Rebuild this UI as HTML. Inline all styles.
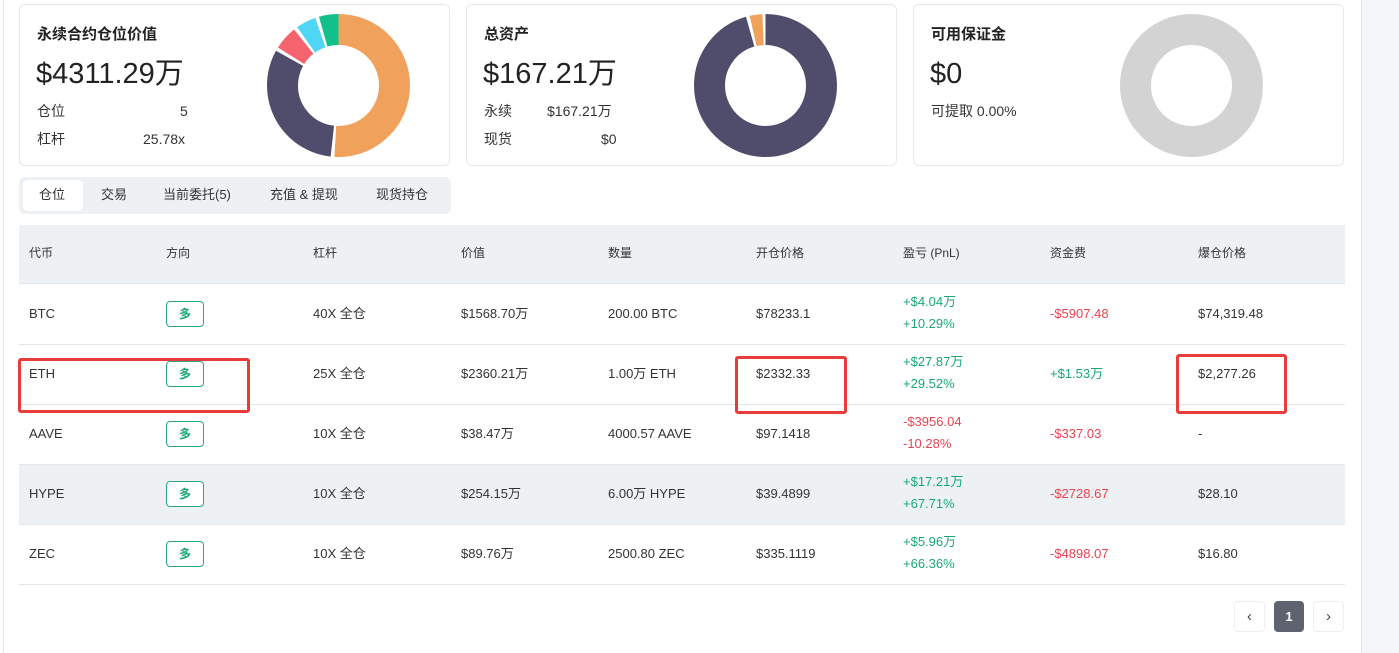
<!DOCTYPE html>
<html><head><meta charset="utf-8"><style>
*{margin:0;padding:0;box-sizing:border-box}
body{width:1399px;height:653px;background:#fff;font-family:"Liberation Sans","Noto Sans CJK SC",sans-serif;color:#333;position:relative;overflow:hidden}
.abs{position:absolute}
.card{position:absolute;top:4px;height:162px;width:431px;border:1px solid #e6e8eb;border-radius:6px;background:#fff}
.ct{position:absolute;left:17px;top:20px;font-size:15px;font-weight:bold;color:#222;line-height:20px}
.cv{position:absolute;left:16px;top:52px;font-size:29px;color:#222;line-height:34px}
.cr{position:absolute;left:17px;font-size:14px;color:#333;line-height:18px}
.tabs{left:19px;top:177px;width:432px;height:37px;background:#eef1f4;border-radius:6px}
.tab{position:absolute;top:9px;font-size:13px;color:#333;line-height:18px}
.th{left:19px;top:225px;width:1326px;height:59px;background:#eef1f4;border-bottom:1px solid #e3e6ea}
.row{left:19px;width:1326px;height:60px;border-bottom:1px solid #e3e6ea}
.c{position:absolute;font-size:13px;color:#333;line-height:18px;top:20px}
.h{font-size:12px;top:19px;color:#333}
.c.t1{top:8px}.c.t2{top:30px}
.g{color:#1aa776}.r{color:#e8434f}
.tag{position:absolute;left:147px;top:16px;width:38px;height:26px;border:1px solid #2aa57f;border-radius:4px;color:#1aa776;font-size:12px;font-weight:bold;text-align:center;line-height:24px}
.box{position:absolute;border:3px solid #ea3b3b;border-radius:3px}
</style></head><body>
<div class="abs" style="left:3px;top:0;width:1px;height:653px;background:#e6e6e6"></div>
<div class="abs" style="left:1361px;top:0;width:38px;height:653px;background:#f5f6f7;border-left:1px solid #e3e3e3"></div>

<div class="card" style="left:19px">
<div class="ct">永续合约仓位价值</div>
<div class="cv">$4311.29万</div>
<div class="cr" style="top:97px">仓位</div><div class="cr" style="top:97px;left:160px">5</div>
<div class="cr" style="top:125px">杠杆</div><div class="cr" style="top:125px;left:123px">25.78x</div>
</div>
<svg class="abs" style="left:266px;top:13px" width="145" height="145" viewBox="0 0 145 145">
<g transform="rotate(-90 72.5 72.5)" fill="none" stroke-width="31">
<circle cx="72.5" cy="72.5" r="56" stroke="#f0a15c" stroke-dasharray="179 352" stroke-dashoffset="0"/>
<circle cx="72.5" cy="72.5" r="56" stroke="#4f4d6b" stroke-dasharray="110 352" stroke-dashoffset="-182"/>
<circle cx="72.5" cy="72.5" r="56" stroke="#f5636f" stroke-dasharray="19 352" stroke-dashoffset="-295"/>
<circle cx="72.5" cy="72.5" r="56" stroke="#4fd6f5" stroke-dasharray="16 352" stroke-dashoffset="-317"/>
<circle cx="72.5" cy="72.5" r="56" stroke="#12c08c" stroke-dasharray="16 352" stroke-dashoffset="-336"/>
</g></svg>

<div class="card" style="left:466px">
<div class="ct">总资产</div>
<div class="cv">$167.21万</div>
<div class="cr" style="top:97px">永续</div><div class="cr" style="top:97px;left:80px">$167.21万</div>
<div class="cr" style="top:125px">现货</div><div class="cr" style="top:125px;left:134px">$0</div>
</div>
<svg class="abs" style="left:693px;top:13px" width="145" height="145" viewBox="0 0 145 145">
<g transform="rotate(-90 72.5 72.5)" fill="none" stroke-width="31">
<circle cx="72.5" cy="72.5" r="56" stroke="#4f4d6b" stroke-dasharray="336 352" stroke-dashoffset="0"/>
<circle cx="72.5" cy="72.5" r="56" stroke="#f0a15c" stroke-dasharray="10 352" stroke-dashoffset="-339"/>
</g></svg>

<div class="card" style="left:913px">
<div class="ct">可用保证金</div>
<div class="cv">$0</div>
<div class="cr" style="top:97px">可提取 0.00%</div>
</div>
<svg class="abs" style="left:1119px;top:13px" width="145" height="145" viewBox="0 0 145 145">
<circle cx="72.5" cy="72.5" r="56" fill="none" stroke="#d3d3d3" stroke-width="31"/></svg>

<div class="abs tabs">
<div class="abs" style="left:4px;top:3px;width:60px;height:31px;background:#fff;border-radius:5px"></div>
<div class="tab" style="left:20px">仓位</div>
<div class="tab" style="left:82px">交易</div>
<div class="tab" style="left:144px">当前委托(5)</div>
<div class="tab" style="left:251px">充值 &amp; 提现</div>
<div class="tab" style="left:357px">现货持仓</div>
</div>

<div class="abs th">
<div class="c h" style="left:10px">代币</div><div class="c h" style="left:147px">方向</div><div class="c h" style="left:294px">杠杆</div>
<div class="c h" style="left:442px">价值</div><div class="c h" style="left:589px">数量</div><div class="c h" style="left:737px">开仓价格</div>
<div class="c h" style="left:884px">盈亏 (PnL)</div><div class="c h" style="left:1031px">资金费</div><div class="c h" style="left:1179px">爆仓价格</div>
</div>

<div class="abs row" style="top:285px">
<div class="c" style="left:10px">BTC</div><div class="tag">多</div><div class="c" style="left:294px">40X 全仓</div>
<div class="c" style="left:442px">$1568.70万</div><div class="c" style="left:589px">200.00 BTC</div><div class="c" style="left:737px">$78233.1</div>
<div class="c g t1" style="left:884px">+$4.04万</div><div class="c g t2" style="left:884px">+10.29%</div>
<div class="c r" style="left:1031px">-$5907.48</div><div class="c" style="left:1179px">$74,319.48</div>
</div>
<div class="abs row" style="top:345px">
<div class="c" style="left:10px">ETH</div><div class="tag">多</div><div class="c" style="left:294px">25X 全仓</div>
<div class="c" style="left:442px">$2360.21万</div><div class="c" style="left:589px">1.00万 ETH</div><div class="c" style="left:737px">$2332.33</div>
<div class="c g t1" style="left:884px">+$27.87万</div><div class="c g t2" style="left:884px">+29.52%</div>
<div class="c g" style="left:1031px">+$1.53万</div><div class="c" style="left:1179px">$2,277.26</div>
</div>
<div class="abs row" style="top:405px">
<div class="c" style="left:10px">AAVE</div><div class="tag">多</div><div class="c" style="left:294px">10X 全仓</div>
<div class="c" style="left:442px">$38.47万</div><div class="c" style="left:589px">4000.57 AAVE</div><div class="c" style="left:737px">$97.1418</div>
<div class="c r t1" style="left:884px">-$3956.04</div><div class="c r t2" style="left:884px">-10.28%</div>
<div class="c r" style="left:1031px">-$337.03</div><div class="c" style="left:1179px">-</div>
</div>
<div class="abs row" style="top:465px;background:#eef1f4">
<div class="c" style="left:10px">HYPE</div><div class="tag" style="background:#fff">多</div><div class="c" style="left:294px">10X 全仓</div>
<div class="c" style="left:442px">$254.15万</div><div class="c" style="left:589px">6.00万 HYPE</div><div class="c" style="left:737px">$39.4899</div>
<div class="c g t1" style="left:884px">+$17.21万</div><div class="c g t2" style="left:884px">+67.71%</div>
<div class="c r" style="left:1031px">-$2728.67</div><div class="c" style="left:1179px">$28.10</div>
</div>
<div class="abs row" style="top:525px">
<div class="c" style="left:10px">ZEC</div><div class="tag">多</div><div class="c" style="left:294px">10X 全仓</div>
<div class="c" style="left:442px">$89.76万</div><div class="c" style="left:589px">2500.80 ZEC</div><div class="c" style="left:737px">$335.1119</div>
<div class="c g t1" style="left:884px">+$5.96万</div><div class="c g t2" style="left:884px">+66.36%</div>
<div class="c r" style="left:1031px">-$4898.07</div><div class="c" style="left:1179px">$16.80</div>
</div>

<div class="box" style="left:18px;top:358px;width:232px;height:55px"></div>
<div class="box" style="left:735px;top:356px;width:112px;height:58px"></div>
<div class="box" style="left:1176px;top:354px;width:111px;height:60px"></div>

<div class="abs" style="left:1234px;top:601px;width:31px;height:31px;border:1px solid #eceef0;border-radius:4px;text-align:center;line-height:29px;font-size:15px;color:#444">&lsaquo;</div>
<div class="abs" style="left:1274px;top:601px;width:30px;height:31px;background:#5f6370;border-radius:4px;text-align:center;line-height:31px;font-size:13px;font-weight:bold;color:#fff">1</div>
<div class="abs" style="left:1313px;top:601px;width:31px;height:31px;border:1px solid #eceef0;border-radius:4px;text-align:center;line-height:29px;font-size:15px;color:#444">&rsaquo;</div>
</body></html>
